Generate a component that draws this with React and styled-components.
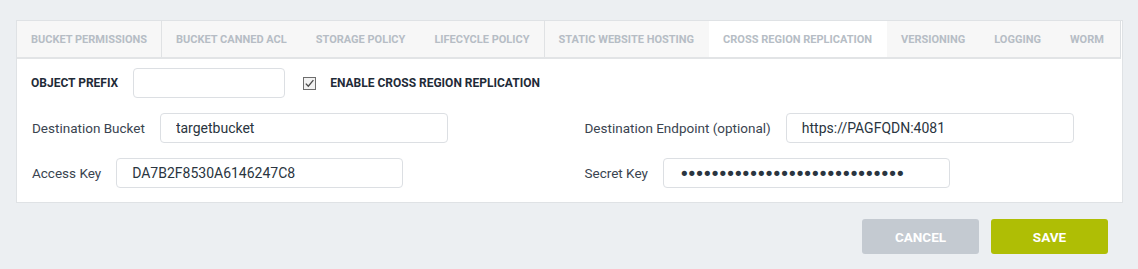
import React from 'react'
import styled, { createGlobalStyle } from 'styled-components'

const GlobalStyle = createGlobalStyle`
  body {
    margin: 0;
    background: #eceff2;
    font-family: Roboto, "Liberation Sans", Arial, sans-serif;
  }
`

const Page = styled.div`
  padding: 20px 15px 0 16px;
`

const Panel = styled.div`
  border: 1px solid #dfe2e5;
  background: #ffffff;
`

const TabBar = styled.ul`
  display: flex;
  list-style-type: none;
  margin: 0 1px 0 0;
  padding: 0;
  height: 36px;
  background: #f7f7f7;
  border-bottom: 2px solid #e2e4e6;
  border-right: 1px solid #dcdfe2;
`

const Tab = styled.li`
  display: flex;
  align-items: center;
  padding: 0 14px;
  border-right: 1px solid ${props => (props.divider ? '#e0e2e4' : 'transparent')};
  background: ${props => (props.active ? '#ffffff' : 'transparent')};
  color: #b6bdc5;
  font-size: 11px;
  font-weight: bold;
  white-space: nowrap;
`

const Body = styled.div`
  padding: 9px 0 14px 0;
`

const TopRow = styled.div`
  display: flex;
  align-items: center;
  padding: 0 14px;
  height: 30px;
`

const StrongLabel = styled.span`
  color: #1f2b38;
  font-size: 12px;
  font-weight: bold;
`

const Input = styled.input`
  box-sizing: border-box;
  width: ${props => props.width}px;
  height: 30px;
  margin-left: 15px;
  padding: 0 15px;
  border: 1px solid #dcdfe3;
  border-radius: 4px;
  background: #ffffff;
  color: #2a3540;
  font-family: inherit;
  font-size: 14px;
  outline: none;

  &[type='password'] {
    font-family: "DejaVu Sans", sans-serif;
    font-size: 18px;
    letter-spacing: -2.9px;
  }
`

const Check = styled.span`
  display: inline-flex;
  margin: 0 14px 0 18px;
  width: 13px;
  height: 13px;
`

const Grid = styled.div`
  display: grid;
  grid-template-columns: 1fr 1fr;
  row-gap: 15px;
  margin-top: 15px;
`

const Field = styled.div`
  display: flex;
  align-items: center;
  padding: 0 15px;
`

const Label = styled.span`
  color: #3a4450;
  font-size: 13.5px;
  white-space: nowrap;
`

const Footer = styled.div`
  display: flex;
  justify-content: flex-end;
  gap: 12px;
  padding: 16px 15px 0 0;
`

const Button = styled.button`
  width: 117px;
  height: 35px;
  border: none;
  border-radius: 3px;
  background: ${props => props.color};
  color: #ffffff;
  font-family: inherit;
  font-size: 13.5px;
  font-weight: bold;
`

const tabs = [
  { name: 'BUCKET PERMISSIONS', divider: true },
  { name: 'BUCKET CANNED ACL' },
  { name: 'STORAGE POLICY' },
  { name: 'LIFECYCLE POLICY', divider: true },
  { name: 'STATIC WEBSITE HOSTING' },
  { name: 'CROSS REGION REPLICATION', active: true },
  { name: 'VERSIONING' },
  { name: 'LOGGING' },
  { name: 'WORM' }
]

const CheckIcon = () => (
  <svg width="13" height="13" viewBox="0 0 13 13">
    <rect x="0.5" y="0.5" width="12" height="12" fill="#f2f2f2" stroke="#6d6d6d" />
    <path d="M2.8 6.6 L5.3 9.2 L10.4 3.2" fill="none" stroke="#4a4a4a" strokeWidth="1.3" />
  </svg>
)

const App = () => (
  <Page>
    <GlobalStyle />
    <Panel>
      <TabBar>
        {tabs.map(t => (
          <Tab key={t.name} active={t.active} divider={t.divider}>
            {t.name}
          </Tab>
        ))}
      </TabBar>
      <Body>
        <TopRow>
          <StrongLabel>OBJECT PREFIX</StrongLabel>
          <Input width={152} defaultValue="" />
          <Check>
            <CheckIcon />
          </Check>
          <StrongLabel>ENABLE CROSS REGION REPLICATION</StrongLabel>
        </TopRow>
        <Grid>
          <Field>
            <Label>Destination Bucket</Label>
            <Input width={288} defaultValue="targetbucket" />
          </Field>
          <Field>
            <Label>Destination Endpoint (optional)</Label>
            <Input width={288} defaultValue="https://PAGFQDN:4081" />
          </Field>
          <Field>
            <Label>Access Key</Label>
            <Input width={287} defaultValue="DA7B2F8530A6146247C8" />
          </Field>
          <Field>
            <Label>Secret Key</Label>
            <Input width={287} type="password" defaultValue="abcdefghijklmnopqrstuvwxyzABC" />
          </Field>
        </Grid>
      </Body>
    </Panel>
    <Footer>
      <Button color="#c4cad1">CANCEL</Button>
      <Button color="#afbe05">SAVE</Button>
    </Footer>
  </Page>
)

export default App
